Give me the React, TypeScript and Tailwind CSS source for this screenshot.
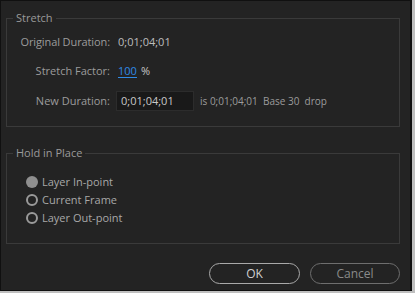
import React from "react";

const font = { fontFamily: '"Open Sans", "Noto Sans", sans-serif' };

function Radio({ checked, label }: { checked?: boolean; label: string }) {
  return (
    <div className="flex items-center h-[18px]">
      {checked ? (
        <span className="w-[12px] h-[12px] rounded-full bg-[#8f8f8f]" />
      ) : (
        <span className="w-[12px] h-[12px] rounded-full border-2 border-[#9a9a9a]" />
      )}
      <span className="ml-[4px] text-[11px] text-[#a8a8a8]">{label}</span>
    </div>
  );
}

export default function App() {
  return (
    <div className="w-[415px] h-[293px] bg-[#bfbfbf] pr-[3px] pb-[2px]" style={font}>
      <div className="w-[412px] h-[291px] bg-[#232323] border-t border-l border-b border-r-2 border-[#101010] pt-[11px] pl-[5px] pr-[10px]">
        <fieldset className="border border-[#3a3a3a] h-[115px] w-[394px]">
          <legend className="ml-[6px] px-[3px] text-[11px] text-[#9a9a9a] leading-[12px]">Stretch</legend>
          <div className="flex items-center h-[16px] mt-[10px]">
            <span className="w-[103px] text-right text-[11px] text-[#9c9c9c] tracking-[-0.1px]">Original Duration:</span>
            <span className="ml-[8px] text-[11px] text-[#bdbdbd]">0;01;04;01</span>
          </div>
          <div className="flex items-center h-[16px] mt-[13px]">
            <span className="w-[103px] text-right text-[11px] text-[#9c9c9c]">Stretch Factor:</span>
            <span className="ml-[8px] text-[11px] text-[#2f8ae6] border-b border-[#2f8ae6] leading-[13px]">100</span>
            <span className="ml-[4px] text-[11px] text-[#c8c8c8]">%</span>
          </div>
          <div className="flex items-center h-[20px] mt-[12px]">
            <span className="w-[103px] text-right text-[11px] text-[#9c9c9c]">New Duration:</span>
            <div className="ml-[6px] w-[78px] h-[20px] bg-[#191919] border border-[#2c2c2c] flex items-center pl-[4px]">
              <span className="text-[11px] text-[#c8c8c8]">0;01;04;01</span>
            </div>
            <span className="ml-[6px] text-[10px] text-[#9c9c9c] whitespace-pre">is 0;01;04;01  Base 30  drop</span>
          </div>
        </fieldset>
        <fieldset className="border border-[#3a3a3a] h-[97px] w-[394px] mt-[20px]">
          <legend className="ml-[6px] px-[3px] text-[11px] text-[#9a9a9a] leading-[12px]">Hold in Place</legend>
          <div className="pl-[19px] mt-[14px] flex flex-col">
            <Radio checked label="Layer In-point" />
            <Radio label="Current Frame" />
            <Radio label="Layer Out-point" />
          </div>
        </fieldset>
        <div className="flex justify-end gap-[10px] mt-[19px] w-[394px]">
          <button className="w-[91px] h-[21px] rounded-full border border-[#a9a9a9] text-[12px] text-[#d0d0d0] flex items-center justify-center">OK</button>
          <button className="w-[90px] h-[21px] rounded-full border border-[#6e6e6e] text-[12px] text-[#8a8a8a] flex items-center justify-center">Cancel</button>
        </div>
      </div>
    </div>
  );
}
